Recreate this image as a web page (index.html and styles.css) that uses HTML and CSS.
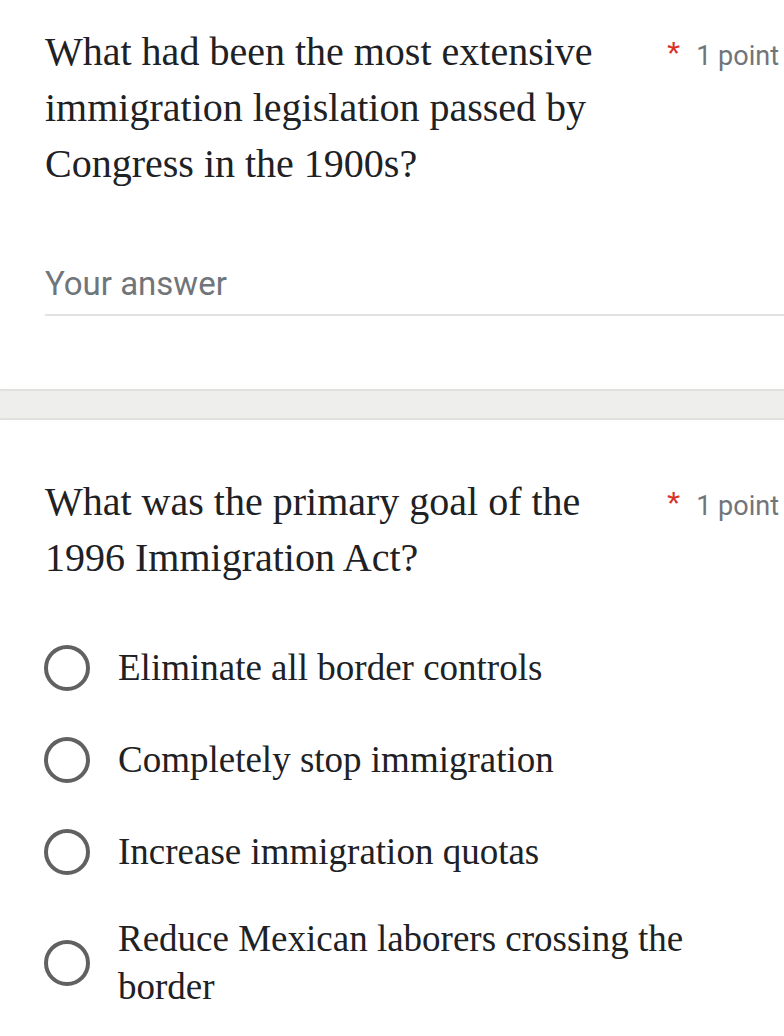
FILE: index.html
```html
<!DOCTYPE html>
<html lang="en">
<head>
<meta charset="utf-8">
<title>Form</title>
<link rel="stylesheet" href="styles.css">
</head>
<body>
<div class="page">
  <section class="card card-first">
    <div class="q-head">
      <div class="q-text">What had been the most extensive immigration legislation passed by Congress in the 1900s?</div>
      <div class="q-points"><span class="star">*</span><span class="pts">1 point</span></div>
    </div>
    <div class="answer">
      <div class="answer-label">Your answer</div>
      <div class="answer-line"></div>
    </div>
  </section>
  <div class="gap"></div>
  <section class="card card-second">
    <div class="q-head">
      <div class="q-text">What was the primary goal of the 1996 Immigration Act?</div>
      <div class="q-points"><span class="star">*</span><span class="pts">1 point</span></div>
    </div>
    <div class="options">
      <div class="option"><span class="radio"></span><span class="opt-text">Eliminate all border controls</span></div>
      <div class="option"><span class="radio"></span><span class="opt-text">Completely stop immigration</span></div>
      <div class="option"><span class="radio"></span><span class="opt-text">Increase immigration quotas</span></div>
      <div class="option option-last"><span class="radio"></span><span class="opt-text">Reduce Mexican laborers crossing the border</span></div>
    </div>
  </section>
</div>
</body>
</html>
```
FILE: styles.css
```css
html, body {
  margin: 0;
  padding: 0;
  background: #ffffff;
  overflow: hidden;
}
.page {
  width: 784px;
  height: 1036px;
  overflow: hidden;
}
.card {
  background: #ffffff;
  margin-left: -10px;
  margin-right: -30px;
  border: 2px solid #e0e0df;
  border-radius: 12px;
  padding-left: 53px;
}
.card-first {
  border-top: none;
  border-top-left-radius: 0;
  padding-top: 24px;
  padding-bottom: 73px;
}
.card-second {
  border-bottom: none;
  border-bottom-left-radius: 0;
  padding-top: 54px;
}
.gap {
  height: 27px;
  background: #eeeeec;
}
.q-head {
  display: flex;
  align-items: baseline;
}
.q-text {
  flex: 0 0 610px;
  font-family: "Liberation Serif", "Times New Roman", serif;
  font-size: 40px;
  line-height: 56px;
  color: #202124;
}
.q-points {
  margin-left: 12px;
  display: flex;
  align-items: baseline;
  white-space: nowrap;
}
.star {
  font-family: "Liberation Sans", Arial, sans-serif;
  font-size: 34px;
  color: #d93025;
  margin-right: 16px;
}
.pts {
  font-family: Roboto, "Liberation Sans", sans-serif;
  font-size: 27px;
  color: #70757a;
}
.answer {
  margin-top: 72px;
}
.answer-label {
  font-family: Roboto, "Liberation Sans", sans-serif;
  font-size: 33px;
  line-height: 40px;
  color: #70757a;
  padding-bottom: 10px;
}
.answer-line {
  height: 2px;
  background: #e2e2e2;
}
.options {
  margin-top: 36px;
}
.option {
  display: flex;
  align-items: center;
  padding: 22px 0;
}
.option-last {
  padding-top: 17px;
}
.radio {
  flex: 0 0 auto;
  width: 38px;
  height: 38px;
  border: 4px solid #616161;
  border-radius: 50%;
  margin-left: -1px;
  margin-right: 28px;
}
.opt-text {
  font-family: "Liberation Serif", "Times New Roman", serif;
  font-size: 37px;
  line-height: 48px;
  color: #202124;
  max-width: 570px;
}
```
